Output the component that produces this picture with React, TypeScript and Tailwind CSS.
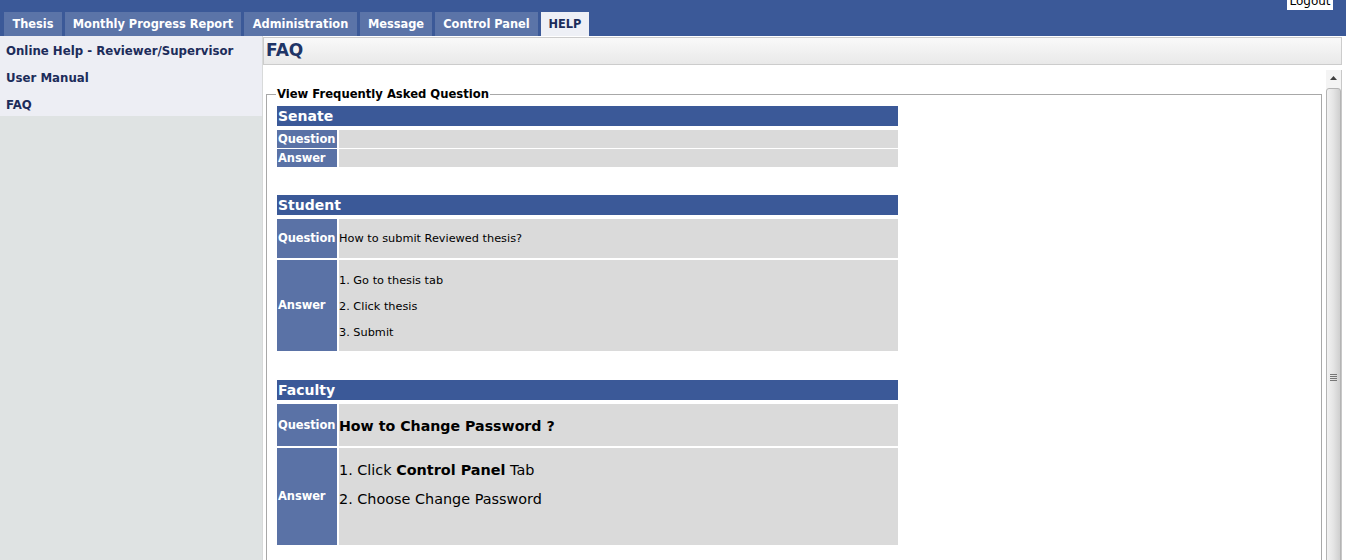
import React from 'react';

const tabs = [
  { name: 'Thesis', w: 'w-[58px]' },
  { name: 'Monthly Progress Report', w: 'w-[176px]' },
  { name: 'Administration', w: 'w-[113px]' },
  { name: 'Message', w: 'w-[72px]' },
  { name: 'Control Panel', w: 'w-[103px]' },
];

const links = ['Online Help - Reviewer/Supervisor', 'User Manual', 'FAQ'];

const Label = ({ text }: { text: string }) => (
  <div className="w-[60px] shrink-0 bg-[#5a72a6] text-white font-bold text-[11.5px] tracking-[-0.1px] flex items-center pl-[1px] pt-[1px]">
    {text}
  </div>
);

const Section = ({ title }: { title: string }) => (
  <div className="h-[20px] bg-[#3b5998] text-white font-bold text-[14px] leading-[20px] pl-[1px] mb-[4px]">
    {title}
  </div>
);

const App = () => {
  return (
    <div className="w-[1346px] h-[560px] overflow-hidden bg-white font-['DejaVu_Sans',Verdana,sans-serif] text-black">
      {/* top bar */}
      <div className="relative h-[36px] bg-[#3b5998] pl-[4px] pt-[12px] flex gap-[3px]">
        {tabs.map((t) => (
          <div
            key={t.name}
            className={`${t.w} h-[24px] pt-[2px] bg-[#5b74a8] text-white font-bold text-[11.4px] flex items-center justify-center`}
          >
            {t.name}
          </div>
        ))}
        <div className="w-[48px] h-[24px] pt-[2px] bg-[#eef0f6] text-[#1c2c5a] font-bold text-[11.4px] flex items-center justify-center">
          HELP
        </div>
        <div className="absolute right-[13px] top-0 w-[46px] h-[10px] bg-white overflow-hidden">
          <div className="text-[12px] leading-[12px] -mt-[5px] text-center text-black">Logout</div>
        </div>
      </div>

      <div className="flex h-[524px]">
        {/* sidebar */}
        <div className="w-[262px] shrink-0 bg-[#dfe3e3]">
          <div className="bg-[#edeef4] h-[80px] pt-[2px]">
            {links.map((l) => (
              <div key={l} className="h-[27px] flex items-center pl-[6px] text-[#1c2c5a] font-bold text-[11.75px]">
                {l}
              </div>
            ))}
          </div>
        </div>

        {/* main */}
        <div className="flex-1 flex flex-col bg-white border-l border-[#d8dada]">
          <div className="mt-[1px] mr-[4px] h-[28px] bg-gradient-to-b from-[#f9f9f9] to-[#e9e9e9] border border-[#cccccc] flex items-center pl-[2px]">
            <span className="text-[#1f3566] font-bold text-[17px]">FAQ</span>
          </div>

          <div className="flex-1 flex mr-[4px]">
            <div className="flex-1 pl-[3px] pr-[4px] pt-[21px]">
              <fieldset className="border border-[#a8a8a8] h-[600px] px-[10px] pb-[10px] pt-0">
                <legend className="px-[1px] ml-[-1px] font-bold text-[11.6px]">View Frequently Asked Question</legend>

                <div className="w-[621px] mt-[3px]">
                  <Section title="Senate" />
                  <div className="flex flex-col gap-[1px]">
                    <div className="flex gap-[2px] h-[18px]">
                      <Label text="Question" />
                      <div className="flex-1 bg-[#dadada]" />
                    </div>
                    <div className="flex gap-[2px] h-[18px]">
                      <Label text="Answer" />
                      <div className="flex-1 bg-[#dadada]" />
                    </div>
                  </div>
                </div>

                <div className="w-[621px] mt-[28px]">
                  <Section title="Student" />
                  <div className="flex flex-col gap-[2px]">
                    <div className="flex gap-[2px] h-[39px]">
                      <Label text="Question" />
                      <div className="flex-1 bg-[#dadada] flex items-center pt-[3px] text-[11.3px]">How to submit Reviewed thesis?</div>
                    </div>
                    <div className="flex gap-[2px] h-[91px]">
                      <Label text="Answer" />
                      <div className="flex-1 bg-[#dadada] pt-[13px] text-[11.3px] leading-[16px] flex flex-col gap-[10px]">
                        <p>1. Go to thesis tab</p>
                        <p>2. Click thesis</p>
                        <p>3. Submit</p>
                      </div>
                    </div>
                  </div>
                </div>

                <div className="w-[621px] mt-[29px]">
                  <Section title="Faculty" />
                  <div className="flex flex-col gap-[2px]">
                    <div className="flex gap-[2px] h-[42px]">
                      <Label text="Question" />
                      <div className="flex-1 bg-[#dadada] flex items-center pt-[3px] text-[14.2px] font-bold">How to Change Password ?</div>
                    </div>
                    <div className="flex gap-[2px] h-[97px]">
                      <Label text="Answer" />
                      <div className="flex-1 bg-[#dadada] pt-[12px] text-[14.4px] leading-[20px] flex flex-col gap-[9px]">
                        <p>1. Click <b>Control Panel</b> Tab</p>
                        <p>2. Choose Change Password</p>
                      </div>
                    </div>
                  </div>
                </div>
              </fieldset>
            </div>

            {/* scrollbar */}
            <div className="w-[16px] mt-[5px] bg-[#f4f4f4] border-r border-[#c8c8c8] flex flex-col">
              <div className="h-[17px] flex items-center justify-center">
                <svg width="7" height="4" viewBox="0 0 7 4">
                  <path d="M3.5 0 L7 4 L0 4 Z" fill="#404040" />
                </svg>
              </div>
              <div className="flex-1 mt-[1px] rounded-t-[3px] border border-[#b4b4b4] bg-gradient-to-r from-[#f2f2f2] via-[#e4e4e4] to-[#cfcfcf] flex flex-col items-center pt-[285px]">
                <div className="flex flex-col gap-[1px]">
                  <div className="w-[7px] h-[1px] bg-[#777]" />
                  <div className="w-[7px] h-[1px] bg-[#777]" />
                  <div className="w-[7px] h-[1px] bg-[#777]" />
                  <div className="w-[7px] h-[1px] bg-[#777]" />
                </div>
              </div>
            </div>
          </div>
        </div>
      </div>
    </div>
  );
};

export default App;
